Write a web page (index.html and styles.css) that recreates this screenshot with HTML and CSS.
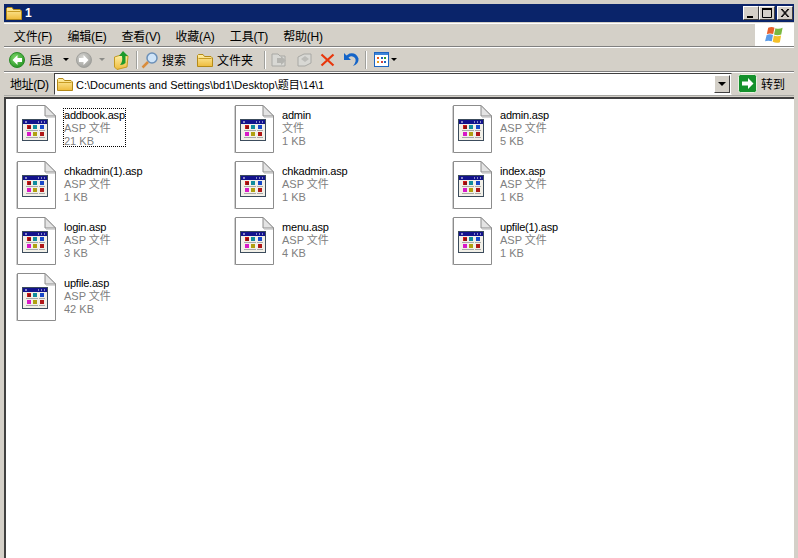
FILE: index.html
```html
<!DOCTYPE html>
<html lang="zh">
<head>
<meta charset="utf-8">
<title>1</title>
<link rel="stylesheet" href="styles.css">
</head>
<body>
<svg class="defs" width="0" height="0">
  <defs>
    <linearGradient id="gold" x1="0" y1="0" x2="0" y2="1">
      <stop offset="0" stop-color="#fff0a8"/>
      <stop offset="1" stop-color="#eebb3c"/>
    </linearGradient>
    <radialGradient id="green" cx=".4" cy=".35" r=".75">
      <stop offset="0" stop-color="#7ed868"/>
      <stop offset="1" stop-color="#1f8f20"/>
    </radialGradient>
    <radialGradient id="grey" cx=".4" cy=".35" r=".75">
      <stop offset="0" stop-color="#d8d8d4"/>
      <stop offset="1" stop-color="#989894"/>
    </radialGradient>
    <symbol id="folder" viewBox="0 0 16 16">
      <path d="M.5 3.500 L1.500 2.500 H6 L7.500 4.500 H14 L15.500 6 V14.500 H.5 Z" fill="url(#gold)" stroke="#b48a18"/>
      <path d="M1.500 6.500 H14.500" stroke="#c89c24"/>
    </symbol>
    <symbol id="asp" viewBox="0 0 40 48">
      <path d="M1.500 .5 H29 L39.500 11 V47.500 H1.500 Z" fill="#fff" stroke="#8c8c8c"/>
      <path d="M.5 1 V48" stroke="#d0d0d0"/>
      <path d="M29 .5 V11 H39.500 Z" fill="#e4e4e4" stroke="#8c8c8c"/>
      <path d="M30 12 H39 V13 H30 Z" fill="#d8d8d8"/>
      <rect x="6.500" y="14.500" width="25" height="21" fill="#f2f0e8" stroke="#3c4c5c"/>
      <rect x="7" y="15" width="24" height="4" fill="#12128c"/>
      <path d="M9 17h2M22 17h1M25 17h1M28 17h1" stroke="#fff"/>
      <rect x="11" y="20" width="4" height="4" fill="#d01818"/>
      <rect x="12" y="21" width="3" height="3" fill="#901010"/>
      <rect x="17" y="20" width="4" height="4" fill="#108c9c"/>
      <rect x="24" y="20" width="4" height="4" fill="#1848c8"/>
      <rect x="11" y="27" width="4" height="4" fill="#d818c8"/>
      <rect x="17" y="27" width="4" height="4" fill="#b0a010"/>
      <rect x="24" y="27" width="4" height="4" fill="#b01818"/>
      <path d="M10 25.500h6M16 25.500h6M23 25.500h6M10 32.500h6M16 32.500h6M23 32.500h6" stroke="#a8a8a8"/>
    </symbol>
  </defs>
</svg>
<div class="window">
  <header class="titlebar">
    <svg class="title-icon"><use href="#folder"/></svg>
    <span class="title-text">1</span>
    <div class="caption-btns">
      <button class="cap"><svg width="16" height="14"><rect x="4" y="10" width="6" height="2" fill="#000"/></svg></button>
      <button class="cap"><svg width="16" height="14"><path d="M3.500 3.500h9v8h-9z" fill="none" stroke="#000"/><path d="M3 3h10" stroke="#000" stroke-width="2"/></svg></button>
      <button class="cap cap-close"><svg width="16" height="14"><path d="M4 3l7 8M5 3l7 8M11 3l-7 8M12 3l-7 8" stroke="#000" fill="none"/></svg></button>
    </div>
  </header>
  <div class="chrome">
    <nav class="menubar">
      <div class="menus">
        <span class="menu">文件(F)</span>
        <span class="menu">编辑(E)</span>
        <span class="menu">查看(V)</span>
        <span class="menu">收藏(A)</span>
        <span class="menu">工具(T)</span>
        <span class="menu">帮助(H)</span>
      </div>
      <div class="flag">
        <svg width="21" height="18" viewBox="0 0 22 20">
          <path d="M4 2 Q8 0 11 2 L9.500 9 Q6 7.500 2.500 9 Z" fill="#e8602c"/>
          <path d="M12 2.500 Q16 4 20 2 L18.500 9.500 Q14 11 10.500 9.500 Z" fill="#78b840"/>
          <path d="M2.300 10 Q6 8.500 9.300 10 L8 17 Q4 15.500 .5 17 Z" fill="#5c9ce8"/>
          <path d="M10.300 10.500 Q14 12 18.300 10.500 L17 18 Q13 19.500 9 17.500 Z" fill="#f4c028"/>
        </svg>
      </div>
    </nav>
    <div class="toolbar">
      <svg class="back" width="16" height="16" viewBox="0 0 16 16"><circle cx="8" cy="8" r="7.500" fill="url(#green)" stroke="#2a8a28"/><path d="M8.500 3 L3.500 8 L8.500 13 V10 H13 V6 H8.500 Z" fill="#fff"/></svg>
      <span class="tb-label">后退</span>
      <span class="caret caret-back"></span>
      <svg class="fwd" width="16" height="16" viewBox="0 0 16 16"><circle cx="8" cy="8" r="7.500" fill="url(#grey)" stroke="#a0a09c"/><path d="M7.500 3 L12.500 8 L7.500 13 V10 H3 V6 H7.500 Z" fill="#fff"/></svg>
      <span class="caret caret-off"></span>
      <svg class="up" width="15" height="20" viewBox="0 0 15 20"><path d="M.5 7 L7 5 L14 6 L13 17 L3 19.500 L.5 17 Z" fill="url(#gold)" stroke="#c49a22"/><path d="M9 1 L14 6 H11.500 V13 Q9.500 15 6 15 Q9 12 8 6 H5 Z" fill="#1c9a2c"/></svg>
      <span class="sep sep-a"></span>
      <svg class="search" width="17" height="18" viewBox="0 0 17 18"><circle cx="11" cy="7" r="5" fill="#cfe4f8" stroke="#6c90b8" stroke-width="1.500"/><path d="M7 11 L1.500 16.500" stroke="#d88c3c" stroke-width="2.500"/></svg>
      <span class="tb-label">搜索</span>
      <svg class="tb-folder" width="16" height="16"><use href="#folder"/></svg>
      <span class="tb-label">文件夹</span>
      <span class="sep sep-b"></span>
      <svg class="dim" width="17" height="16" viewBox="0 0 17 16"><path d="M1 2h6l2 2h5v10H1z" fill="#d8d8d4" stroke="#a8a8a4"/><path d="M6 6h4V4l5 4.500-5 4.500v-2H6z" fill="#b4b4b0"/></svg>
      <svg class="dim-b" width="16" height="16" viewBox="0 0 16 16"><path d="M2 5l6-3h7v9l-6 3H2z" fill="#d8d8d4" stroke="#a8a8a4"/><path d="M5 7l4-3 4 3-4 3z" fill="#bcbcb8"/></svg>
      <svg class="del" width="15" height="14" viewBox="0 0 15 14"><path d="M1.500 1.500 L13.500 12.500 M13.500 1.500 L1.500 12.500" stroke="#e8360c" stroke-width="2.200"/></svg>
      <svg class="undo" width="16" height="16" viewBox="0 0 16 16"><path d="M1 1 L1 8 L8 8 L5.500 5.500 Q9 3 12 6 Q14 9 10 14 Q16 12 15.500 6.500 Q13 0 6.500 1.500 L3.500 3.500 Z" fill="#1464c8"/></svg>
      <span class="sep sep-c"></span>
      <svg class="views" width="15" height="15" viewBox="0 0 15 15"><rect x=".5" y=".5" width="14" height="14" fill="#fff" stroke="#1c64c0"/><rect x="1" y="1" width="13" height="2" fill="#3c84d8"/><path d="M3 5h2v2H3z" fill="#e85c20"/><path d="M7 5h2v2H7z" fill="#1c64c0"/><path d="M10 5h2v2h-2z" fill="#2c9c2c"/><path d="M3 9h2v2H3z" fill="#e8a020"/><path d="M7 9h2v2H7z" fill="#d04040"/><path d="M10 9h2v2h-2z" fill="#1c64c0"/></svg>
      <span class="caret caret-views"></span>
    </div>
    <div class="addressbar">
      <span class="addr-label">地址(D)</span>
      <div class="addr-box">
        <svg class="addr-folder" width="16" height="16"><use href="#folder"/></svg>
        <span class="addr-text">C:\Documents and Settings\bd1\Desktop\题目\14\1</span>
        <button class="addr-drop"><span class="caret caret-drop"></span></button>
      </div>
      <svg class="go" width="19" height="19" viewBox="0 0 19 19"><rect x=".5" y=".5" width="18" height="18" rx="2" fill="#14912c" stroke="#e8f0e0"/><path d="M10 4 L15.500 9.500 L10 15 V11.500 H4 V7.500 H10 Z" fill="#fff"/></svg>
      <span class="go-label">转到</span>
    </div>
  </div>
  <main class="files">
    <div class="file"><svg class="file-icon"><use href="#asp"/></svg><div class="file-text focused"><span class="name">addbook.asp</span><span class="meta">ASP 文件</span><span class="meta">21 KB</span></div></div>
    <div class="file"><svg class="file-icon"><use href="#asp"/></svg><div class="file-text"><span class="name">admin</span><span class="meta">文件</span><span class="meta">1 KB</span></div></div>
    <div class="file"><svg class="file-icon"><use href="#asp"/></svg><div class="file-text"><span class="name">admin.asp</span><span class="meta">ASP 文件</span><span class="meta">5 KB</span></div></div>
    <div class="file"><svg class="file-icon"><use href="#asp"/></svg><div class="file-text"><span class="name">chkadmin(1).asp</span><span class="meta">ASP 文件</span><span class="meta">1 KB</span></div></div>
    <div class="file"><svg class="file-icon"><use href="#asp"/></svg><div class="file-text"><span class="name">chkadmin.asp</span><span class="meta">ASP 文件</span><span class="meta">1 KB</span></div></div>
    <div class="file"><svg class="file-icon"><use href="#asp"/></svg><div class="file-text"><span class="name">index.asp</span><span class="meta">ASP 文件</span><span class="meta">1 KB</span></div></div>
    <div class="file"><svg class="file-icon"><use href="#asp"/></svg><div class="file-text"><span class="name">login.asp</span><span class="meta">ASP 文件</span><span class="meta">3 KB</span></div></div>
    <div class="file"><svg class="file-icon"><use href="#asp"/></svg><div class="file-text"><span class="name">menu.asp</span><span class="meta">ASP 文件</span><span class="meta">4 KB</span></div></div>
    <div class="file"><svg class="file-icon"><use href="#asp"/></svg><div class="file-text"><span class="name">upfile(1).asp</span><span class="meta">ASP 文件</span><span class="meta">1 KB</span></div></div>
    <div class="file"><svg class="file-icon"><use href="#asp"/></svg><div class="file-text"><span class="name">upfile.asp</span><span class="meta">ASP 文件</span><span class="meta">42 KB</span></div></div>
  </main>
</div>
</body>
</html>
```
FILE: styles.css
```css
* { box-sizing: border-box; }
html, body { margin: 0; height: 100%; overflow: hidden; }
body {
  background: #d4d0c8;
  font: 11px "Liberation Sans", "Noto Sans CJK SC", sans-serif;
  color: #000;
}
.defs { position: absolute; }
.window {
  height: 558px;
  display: flex;
  flex-direction: column;
  padding: 4px 4px 0 4px;
}
.titlebar {
  height: 18px;
  flex: none;
  background: #0a246a;
  display: flex;
  align-items: center;
  color: #fff;
  font-weight: bold;
  font-size: 12px;
  padding: 0 1px 0 2px;
  margin-bottom: 1px;
}
.title-icon { width: 16px; height: 16px; margin-right: 3px; }
.title-text { flex: 1; }
.caption-btns { display: flex; }
.cap {
  width: 16px;
  height: 14px;
  padding: 0;
  border: 1px solid;
  border-color: #fff #404040 #404040 #fff;
  background: #d4d0c8;
  display: block;
  overflow: hidden;
}
.cap svg { display: block; margin: -1px; }
.cap-close { margin-left: 2px; }
.chrome { flex: none; }
.menubar {
  height: 24px;
  display: flex;
  border-top: 1px solid #fff;
  border-bottom: 1px solid #808080;
  box-shadow: 0 1px 0 #fff;
  justify-content: space-between;
}
.menus { display: flex; align-items: center; padding-left: 2px; }
.menu {
  width: 54px;
  text-align: center;
  font-size: 12px;
  letter-spacing: -0.2px;
}
.flag {
  width: 39px;
  background: #fff;
  display: flex;
  align-items: center;
  justify-content: center;
}
.toolbar {
  height: 24px;
  margin-top: 1px;
  display: flex;
  align-items: center;
  border-bottom: 1px solid #808080;
  box-shadow: 0 1px 0 #fff;
  padding-left: 5px;
}
.toolbar svg { flex: none; }
.tb-label {
  font-size: 12px;
  margin-left: 4px;
  flex: none;
}
.caret {
  width: 0;
  height: 0;
  border: 3px solid transparent;
  border-top: 3px solid #000;
  border-bottom: 0;
  flex: none;
}
.caret-back { margin-left: 10px; }
.caret-off { border-top-color: #8c8c88; margin-left: 7px; }
.fwd { margin-left: 7px; }
.up { margin-left: 9px; }
.sep {
  width: 2px;
  height: 18px;
  background: #a0a09c;
  border-right: 1px solid #fff;
  flex: none;
}
.sep-a { margin-left: 7px; }
.search { margin-left: 3px; }
.tb-folder { margin-left: 11px; }
.sep-b { margin-left: 11px; }
.dim { margin-left: 5px; }
.dim-b { margin-left: 8px; }
.del { margin-left: 8px; }
.undo { margin-left: 8px; }
.sep-c { margin-left: 6px; }
.views { margin-left: 7px; }
.caret-views { margin-left: 2px; }
.addressbar {
  height: 24px;
  display: flex;
  align-items: center;
  border-bottom: 1px solid #a8a8a4;
}
.addr-label {
  width: 50px;
  padding-left: 6px;
  font-size: 12px;
  letter-spacing: -0.4px;
  flex: none;
}
.addr-box {
  width: 678px;
  height: 22px;
  background: #fff;
  border: 1px solid;
  border-color: #404040 #d4d0c8 #fff #404040;
  display: flex;
  align-items: center;
  padding-left: 2px;
  padding-right: 1px;
  flex: none;
}
.addr-folder { margin-right: 3px; }
.addr-text { flex: 1; font-size: 11px; white-space: nowrap; }
.addr-drop {
  width: 16px;
  height: 18px;
  padding: 0;
  background: #d4d0c8;
  border: 1px solid;
  border-color: #fff #404040 #404040 #fff;
  display: flex;
  align-items: center;
  justify-content: center;
}
.caret-drop { margin: 0; border-width: 4px; border-bottom: 0; }
.go { margin-left: 6px; flex: none; }
.go-label { margin-left: 4px; font-size: 12px; }
.files {
  flex: 1;
  margin-top: 1px;
  background: #fff;
  border-top: 2px solid #404040;
  border-left: 2px solid #404040;
  display: grid;
  grid-template-columns: repeat(3, 218px);
  grid-auto-rows: 56px;
  align-content: start;
  padding: 5px 0 0 10px;
}
.file { display: flex; align-items: flex-start; padding-top: 1px; }
.file-icon { width: 40px; height: 48px; flex: none; }
.file-text {
  margin: 3px 0 0 7px;
  display: flex;
  flex-direction: column;
  line-height: 13px;
  border: 1px dotted transparent;
  height: 39px;
}
.focused { border-color: #000; }
.name { color: #000; letter-spacing: -0.2px; }
.meta { color: #808080; }
```
